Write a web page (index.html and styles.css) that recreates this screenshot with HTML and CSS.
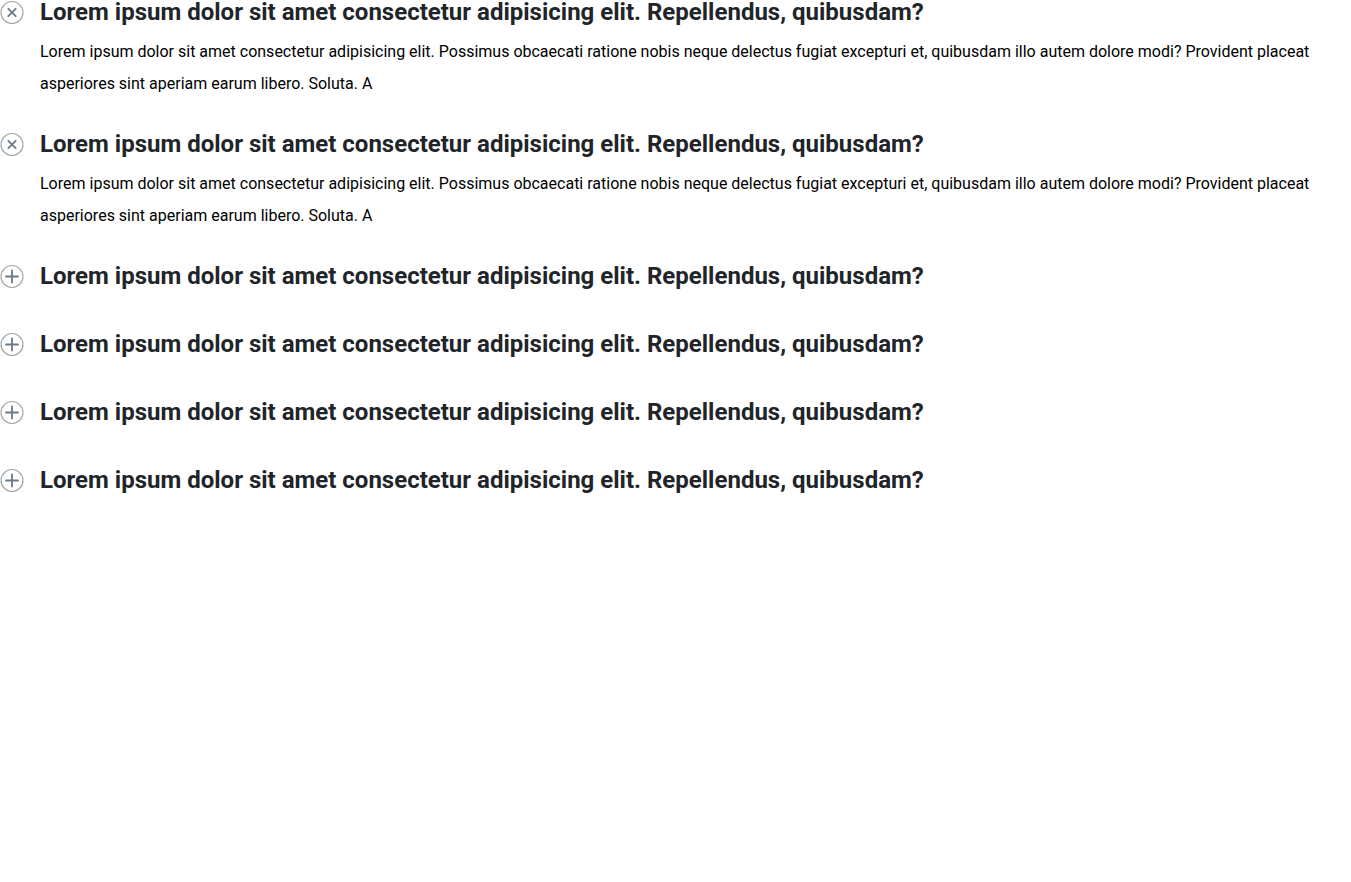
FILE: index.html
```html
<!DOCTYPE html>
<html lang="en">
<head>
<meta charset="utf-8">
<title>FAQ</title>
<link rel="stylesheet" href="styles.css">
</head>
<body>
<div class="faq">
  <div class="item">
    <div class="head">
      <svg class="icon" viewBox="0 0 24 24" width="24" height="24"><circle cx="12" cy="12.5" r="11" class="ring"/><path d="M8.3 8.8 L15.7 16.2 M15.7 8.8 L8.3 16.2" class="mark"/></svg>
      <h2 class="title">Lorem ipsum dolor sit amet consectetur adipisicing elit. Repellendus, quibusdam?</h2>
    </div>
    <p class="answer">Lorem ipsum dolor sit amet consectetur adipisicing elit. Possimus obcaecati ratione nobis neque delectus fugiat excepturi et, quibusdam illo autem dolore modi? Provident placeat asperiores sint aperiam earum libero. Soluta. A</p>
  </div>
  <div class="item">
    <div class="head">
      <svg class="icon" viewBox="0 0 24 24" width="24" height="24"><circle cx="12" cy="12.5" r="11" class="ring"/><path d="M8.3 8.8 L15.7 16.2 M15.7 8.8 L8.3 16.2" class="mark"/></svg>
      <h2 class="title">Lorem ipsum dolor sit amet consectetur adipisicing elit. Repellendus, quibusdam?</h2>
    </div>
    <p class="answer">Lorem ipsum dolor sit amet consectetur adipisicing elit. Possimus obcaecati ratione nobis neque delectus fugiat excepturi et, quibusdam illo autem dolore modi? Provident placeat asperiores sint aperiam earum libero. Soluta. A</p>
  </div>
  <div class="item">
    <div class="head">
      <svg class="icon" viewBox="0 0 24 24" width="24" height="24"><circle cx="12" cy="12.5" r="11" class="ring"/><path d="M12 6.5 V18.5 M6 12.5 H18" class="mark"/></svg>
      <h2 class="title">Lorem ipsum dolor sit amet consectetur adipisicing elit. Repellendus, quibusdam?</h2>
    </div>
  </div>
  <div class="item">
    <div class="head">
      <svg class="icon" viewBox="0 0 24 24" width="24" height="24"><circle cx="12" cy="12.5" r="11" class="ring"/><path d="M12 6.5 V18.5 M6 12.5 H18" class="mark"/></svg>
      <h2 class="title">Lorem ipsum dolor sit amet consectetur adipisicing elit. Repellendus, quibusdam?</h2>
    </div>
  </div>
  <div class="item">
    <div class="head">
      <svg class="icon" viewBox="0 0 24 24" width="24" height="24"><circle cx="12" cy="12.5" r="11" class="ring"/><path d="M12 6.5 V18.5 M6 12.5 H18" class="mark"/></svg>
      <h2 class="title">Lorem ipsum dolor sit amet consectetur adipisicing elit. Repellendus, quibusdam?</h2>
    </div>
  </div>
  <div class="item">
    <div class="head">
      <svg class="icon" viewBox="0 0 24 24" width="24" height="24"><circle cx="12" cy="12.5" r="11" class="ring"/><path d="M12 6.5 V18.5 M6 12.5 H18" class="mark"/></svg>
      <h2 class="title">Lorem ipsum dolor sit amet consectetur adipisicing elit. Repellendus, quibusdam?</h2>
    </div>
  </div>
</div>
</body>
</html>
```

FILE: styles.css
```css
html, body {
  margin: 0;
  padding: 0;
  background: #fff;
}
body {
  font-family: Roboto, "Liberation Sans", sans-serif;
  color: #000;
}
.faq {
  display: flex;
  flex-direction: column;
}
.item {
  padding-bottom: 32px;
}
.head {
  display: flex;
  align-items: flex-start;
  gap: 16px;
  margin-bottom: 12px;
}
.icon {
  flex: none;
  display: block;
}
.ring {
  fill: none;
  stroke: #a7a9ad;
  stroke-width: 1.2;
}
.mark {
  fill: none;
  stroke: #6e7a88;
  stroke-width: 1.8;
  stroke-linecap: round;
}
.title {
  margin: 0;
  font-size: 24px;
  line-height: 24px;
  font-weight: 700;
  color: #212529;
}
.answer {
  margin: 0 0 0 40px;
  font-size: 16px;
  line-height: 32px;
  color: #000;
}
```
